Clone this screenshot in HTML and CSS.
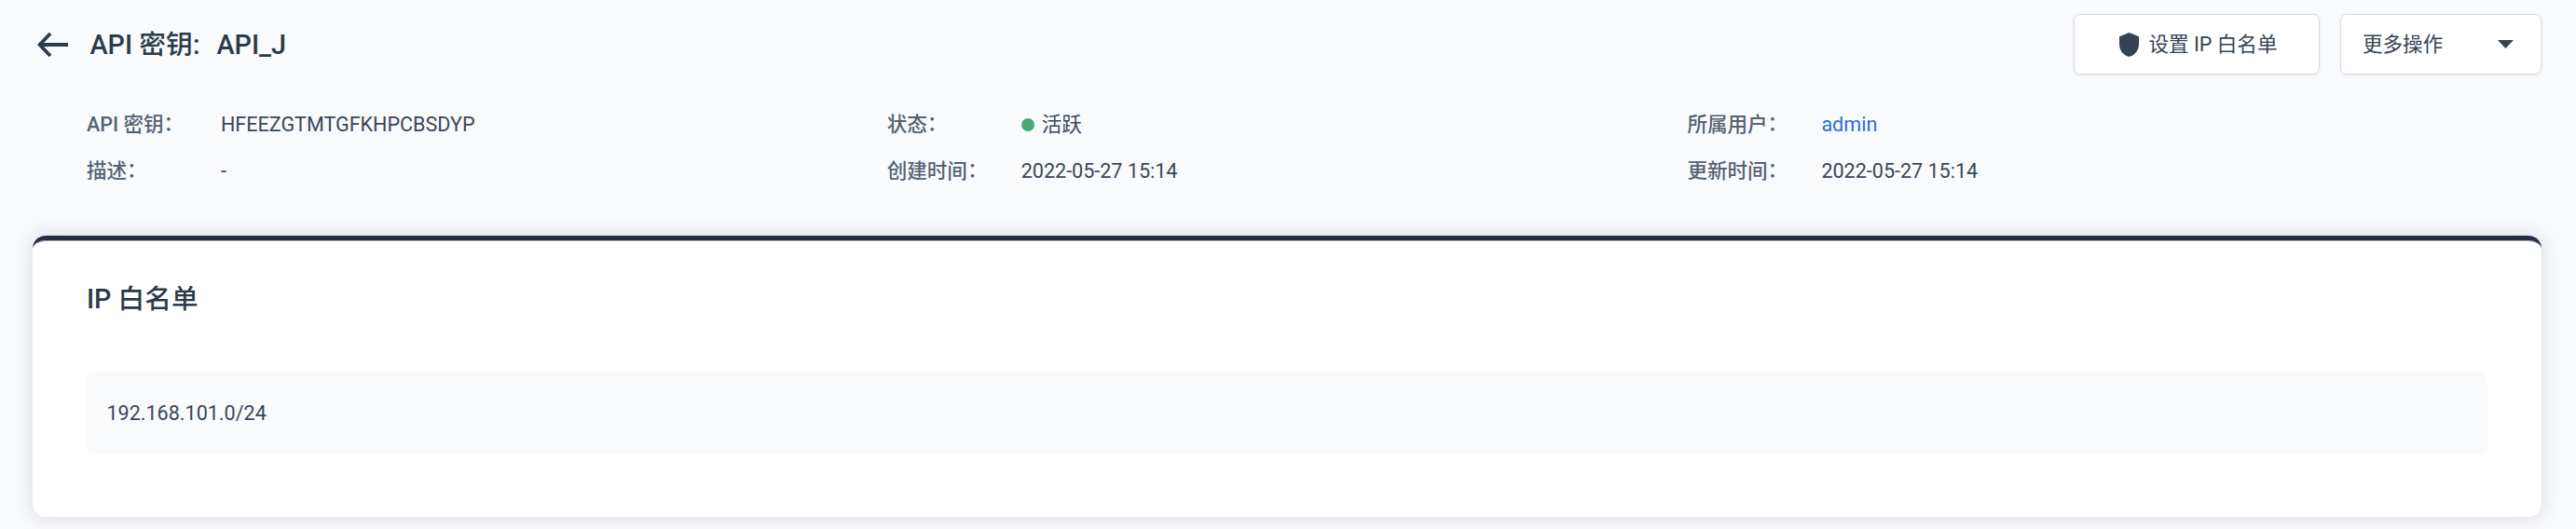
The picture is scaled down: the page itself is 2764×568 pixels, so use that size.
FILE: index.html
```html
<!DOCTYPE html>
<html lang="zh-CN">
<head>
<meta charset="utf-8">
<title>API 密钥</title>
<link rel="stylesheet" href="styles.css">
</head>
<body>
<header class="header">
  <svg class="back" viewBox="0 0 34 28"><path d="M33 14H3M14 2L2.600 14L14 26" fill="none" stroke="currentColor" stroke-width="3.800"/></svg>
  <h1 class="title"><span>API 密钥:</span><span>API_J</span></h1>
  <div class="actions">
    <button class="btn btn-ip">
      <svg class="shield" viewBox="0 0 21 26"><path d="M10.500 0L21 4.300V12.500C21 19 16.500 24.500 10.500 26C4.500 24.500 0 19 0 12.500V4.300Z" fill="currentColor"/></svg>
      <span>设置 IP 白名单</span>
    </button>
    <button class="btn btn-more">
      <span>更多操作</span>
      <svg class="caret" viewBox="0 0 17 9"><path d="M0 0H17L8.500 9Z" fill="currentColor"/></svg>
    </button>
  </div>
</header>
<dl class="details">
  <div class="item"><dt>API 密钥<span class="colon">：</span></dt><dd>HFEEZGTMTGFKHPCBSDYP</dd></div>
  <div class="item"><dt>状态<span class="colon">：</span></dt><dd class="status"><i class="dot"></i>活跃</dd></div>
  <div class="item"><dt>所属用户<span class="colon">：</span></dt><dd><a class="link">admin</a></dd></div>
  <div class="item"><dt>描述<span class="colon">：</span></dt><dd>-</dd></div>
  <div class="item"><dt>创建时间<span class="colon">：</span></dt><dd>2022-05-27 15:14</dd></div>
  <div class="item"><dt>更新时间<span class="colon">：</span></dt><dd>2022-05-27 15:14</dd></div>
</dl>
<section class="card">
  <h2 class="card-title">IP 白名单</h2>
  <div class="entry">192.168.101.0/24</div>
</section>
</body>
</html>
```
FILE: styles.css
```css
* { box-sizing: border-box; }
body {
  margin: 0;
  height: 568px;
  overflow: hidden;
  background: #f9fafc;
  color: #3a4759;
  font: 400 21.550px/50px Roboto, "Noto Sans CJK SC", sans-serif;
}
.header {
  display: flex;
  align-items: center;
  height: 65px;
  margin: 15px 37px 0 40px;
}
.back { width: 34px; height: 28px; color: #2c3b4a; }
.title {
  display: flex;
  gap: 18px;
  margin: 0 0 0 22.500px;
  color: #2c3b4a;
  font-size: 28.800px;
  font-weight: 500;
}
.actions { display: flex; gap: 22px; margin-left: auto; }
.btn {
  display: flex;
  align-items: center;
  height: 65px;
  padding: 0 23px;
  border: 1px solid #d7dde5;
  border-radius: 7px;
  background: #fff;
  box-shadow: 0 1px 4px rgba(40, 60, 80, .08);
  color: #364354;
  font: inherit;
}
.btn-ip { width: 264px; justify-content: center; gap: 11px; padding-left: 26px; }
.btn-more { width: 216px; justify-content: space-between; padding-right: 29px; }
.btn span { padding-top: 1px; }
.shield { width: 21px; height: 26px; }
.caret { width: 17px; height: 9px; }
.details {
  display: grid;
  grid-template-columns: repeat(3, 858.700px);
  margin: 29px 0 0 93px;
}
.item { display: flex; }
dt { width: 144px; color: #536274; font-weight: 500; }
dd { margin: 0; }
.colon { display: inline-block; height: 50px; transform: translate(0, -1px); vertical-align: top; }
.status { display: flex; align-items: center; gap: 8px; }
.dot { width: 14px; height: 14px; border-radius: 50%; background: #4ca777; }
.link { color: #2b6fd3; }
.card {
  height: 302px;
  margin: 44px 37px 0 35px;
  padding: 38px 58px 0;
  border-top: 5px solid #262e42;
  border-radius: 14px;
  background: #fff;
  box-shadow: 0 0 21px rgba(40, 55, 75, .17), inset 0 1px 0 #9aa3ae;
}
.card-title {
  margin: 0;
  color: #2c3b4a;
  font-size: 28.700px;
  font-weight: 500;
  line-height: 50px;
}
.entry {
  height: 87px;
  margin-top: 54px;
  padding: 0 21.500px;
  border-radius: 7px;
  background: #f9fafc;
  line-height: 87px;
}
```
